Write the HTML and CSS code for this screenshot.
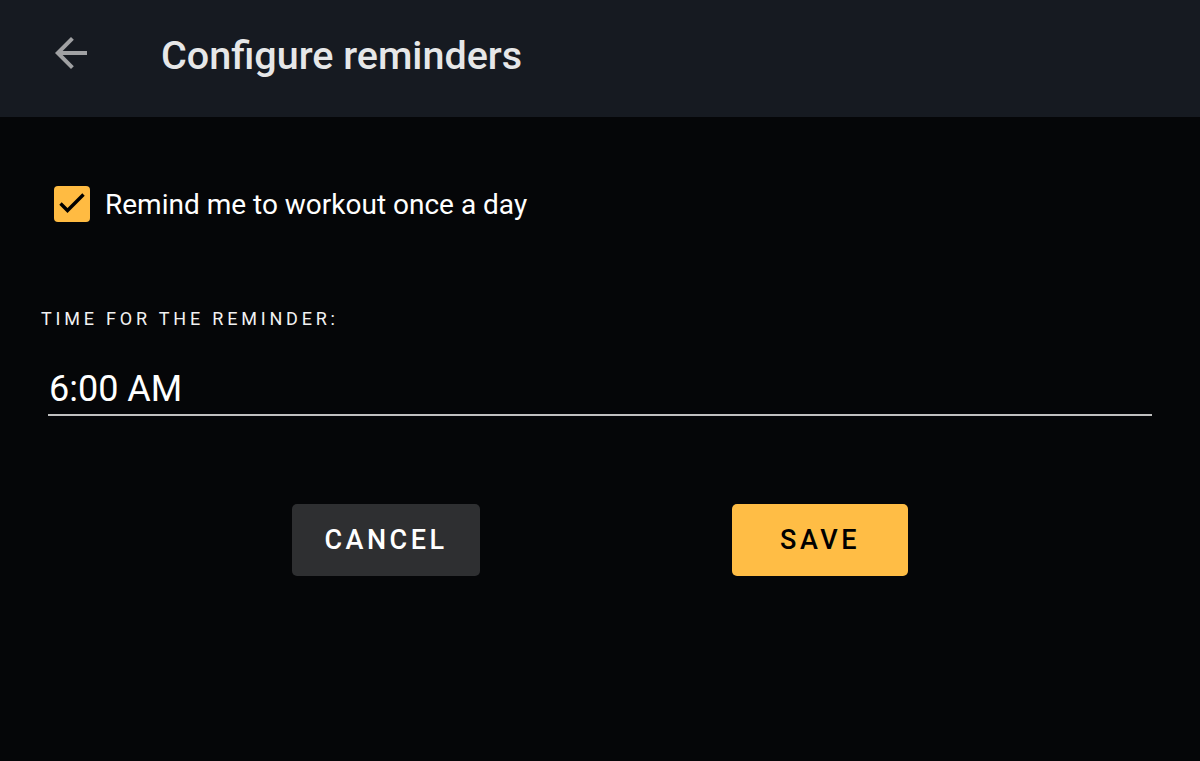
FILE: index.html
```html
<!DOCTYPE html>
<html>
<head>
<meta charset="utf-8">
<link rel="stylesheet" href="styles.css">
</head>
<body>
<header class="appbar">
  <button class="back" aria-label="Back">
    <svg width="48" height="48" viewBox="0 0 24 24"><path d="M20 11H7.83l5.59-5.59L12 4l-8 8 8 8 1.41-1.41L7.83 13H20v-2z" fill="currentColor"/></svg>
  </button>
  <h1 class="title">Configure reminders</h1>
</header>
<main class="content">
  <label class="check-row">
    <span class="checkbox">
      <svg width="36" height="36" viewBox="0 0 36 36"><polyline points="6.5,17.5 13.5,24.5 29.5,8.5" fill="none" stroke="#000" stroke-width="3.4"/></svg>
    </span>
    <span class="check-text">Remind me to workout once a day</span>
  </label>
  <div class="field-label">TIME FOR THE REMINDER:</div>
  <div class="time-field">6:00 AM</div>
  <div class="actions">
    <button class="btn btn-cancel">CANCEL</button>
    <button class="btn btn-save">SAVE</button>
  </div>
</main>
</body>
</html>
```
FILE: styles.css
```css
html, body {
  margin: 0;
  padding: 0;
  background: #050608;
  height: 100%;
  font-family: Roboto, "Noto Sans", sans-serif;
}
.appbar {
  height: 117px;
  background: #161a21;
  display: flex;
  align-items: center;
}
.back {
  background: none;
  border: 0;
  padding: 0;
  margin-left: 47px;
  width: 48px;
  height: 48px;
  color: #a0a1a3;
  display: flex;
  align-items: center;
  justify-content: center;
  margin-top: -12px;
}
.back svg {
  display: block;
}
.title {
  margin: -6px 0 0 66px;
  font-size: 39.5px;
  font-weight: 500;
  color: #e6e7e8;
}
.content {
  padding: 69px 48px 0 48px;
}
.check-row {
  display: flex;
  align-items: center;
  margin-left: 6px;
}
.checkbox {
  width: 36px;
  height: 36px;
  background: #ffbb42;
  border-radius: 4px;
  display: flex;
}
.check-text {
  margin-left: 15px;
  font-size: 28px;
  color: #ffffff;
}
.field-label {
  margin: 86px 0 0 -7px;
  font-size: 18px;
  letter-spacing: 3.8px;
  color: #f2f2f2;
}
.time-field {
  margin-top: 39px;
  font-size: 36px;
  color: #ffffff;
  padding: 0 0 4px 1px;
  border-bottom: 2px solid #c0c0c0;
}
.actions {
  display: flex;
  justify-content: center;
  gap: 252px;
  margin-top: 88px;
}
.btn {
  height: 72px;
  border: 0;
  border-radius: 5px;
  font-family: Roboto, sans-serif;
  font-size: 27px;
  font-weight: 500;
  letter-spacing: 3.5px;
  padding: 0;
}
.btn-cancel {
  width: 188px;
  background: #2e2f31;
  color: #ffffff;
}
.btn-save {
  width: 176px;
  background: #ffbd45;
  color: #000000;
}
```
